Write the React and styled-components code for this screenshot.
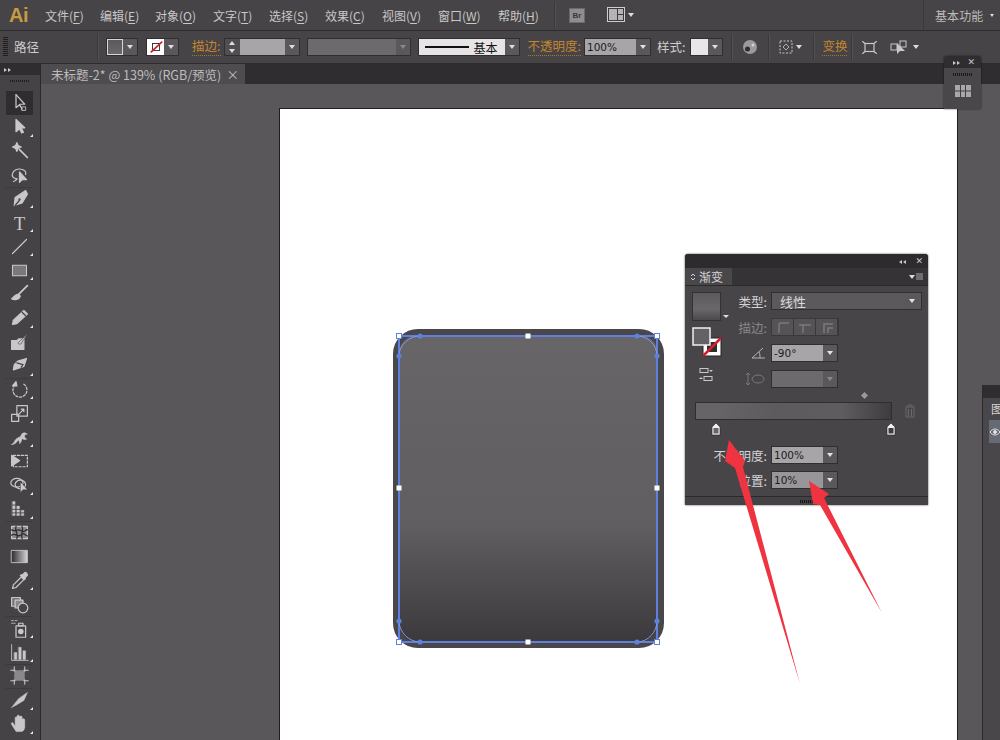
import React from "react"
import styled, { createGlobalStyle } from "styled-components"

const GlobalStyle = createGlobalStyle`
  html, body { margin: 0; padding: 0; background: #59565a; }
  * { box-sizing: border-box; }
`

const cjk = `"Noto Sans CJK SC", "Liberation Sans", sans-serif`
const ICON = "#c9c7c9"

const Root = styled.div`
  position: relative;
  width: 1000px;
  height: 740px;
  overflow: hidden;
  display: flex;
  flex-direction: column;
  background: #59565a;
  font-family: ${cjk};
  color: #cfcdcf;
`

/* menu bar */
const MenuBar = styled.div`
  height: 31px;
  flex: none;
  display: flex;
  align-items: center;
  background: #464446;
  border-bottom: 1px solid #2d2b2d;
`
const Logo = styled.div`
  width: 45px;
  padding-left: 9px;
  font: bold 20px "Liberation Sans", sans-serif;
  color: #c59a42;
  letter-spacing: -0.5px;
`
const MenuItem = styled.div`
  width: ${p => p.$w}px;
  flex: none;
  font-size: 12px;
  color: #c9c7c9;
  white-space: nowrap;
  u { text-underline-offset: 2px; }
`
const VSep = styled.div`
  width: 1px;
  height: ${p => p.$h || 26}px;
  flex: none;
  margin-left: ${p => p.$ml || 0}px;
  background: #3a383a;
  box-shadow: 1px 0 0 #525052;
`
const BrBadge = styled.div`
  width: 16px;
  height: 15px;
  margin-left: 14px;
  flex: none;
  background: #8f8d8f;
  border: 1px solid #6c6a6c;
  color: #3b393b;
  font: bold 8px/13px "Liberation Sans", sans-serif;
  text-align: center;
`
const Workspace = styled.div`
  margin-left: auto;
  width: 77px;
  height: 30px;
  display: flex;
  align-items: center;
  padding-left: 11px;
  border-left: 1px solid #3a383a;
  font-size: 12px;
  color: #bdbbbd;
  letter-spacing: 0.1px;
`

const Caret = styled.span`
  display: inline-block;
  flex: none;
  margin-left: ${p => p.$ml || 0}px;
  width: 0;
  height: 0;
  border-left: ${p => p.$s || 3}px solid transparent;
  border-right: ${p => p.$s || 3}px solid transparent;
  border-top: ${p => (p.$s || 3) + 1}px solid ${p => p.$c || "#dedcde"};
`

/* control bar */
const ControlBar = styled.div`
  height: 33px;
  flex: none;
  display: flex;
  align-items: center;
  padding-left: 3px;
  background: #464446;
  border-bottom: 1px solid #2d2b2d;
`
const Grip = styled.div`
  width: 5px;
  height: 20px;
  flex: none;
  background: repeating-linear-gradient(#1f1d1f 0 1px, transparent 1px 2px);
`
const ControlLabel = styled.div`
  flex: none;
  margin-left: ${p => p.$ml || 0}px;
  font-size: 12.5px;
  line-height: 18px;
  white-space: nowrap;
  color: ${p => (p.$link ? "#c4862f" : "#cfcdcf")};
  ${p => p.$link && "border-bottom: 1px dotted #a87428; line-height: 16px; height: 18px;"}
`
const Combo = styled.div`
  flex: none;
  display: flex;
  height: ${p => p.$h || 18}px;
  margin-left: ${p => p.$ml || 0}px;
  border: 1px solid #302e30;
  background: #5a585a;
`
const ComboValue = styled.div`
  width: ${p => p.$w}px;
  height: 100%;
  display: flex;
  align-items: center;
  padding-left: ${p => p.$pl || 2}px;
  background: ${p => p.$bg || "#a7a5a8"};
  font: 10.5px "DejaVu Sans", sans-serif;
  color: #1c1b1c;
  overflow: hidden;
  white-space: nowrap;
`
const ComboArrow = styled.div`
  width: ${p => p.$w || 14}px;
  height: 100%;
  display: flex;
  align-items: center;
  justify-content: center;
`
const Spinner = styled.div`
  width: 15px;
  height: 100%;
  display: flex;
  flex-direction: column;
  align-items: center;
  justify-content: space-around;
  background: #504e50;
  span:first-child { transform: rotate(180deg); }
`
const StrokeLine = styled.div`
  width: 44px;
  height: 2px;
  background: #111;
  margin-right: 5px;
`
const BaseText = styled.span`
  font: 12px ${cjk};
  color: #111;
`
const IconSlot = styled.div`
  flex: none;
  display: flex;
  align-items: center;
  margin-left: ${p => p.$ml || 0}px;
`

/* body */
const Body = styled.div`
  flex: 1;
  min-height: 0;
  display: flex;
`
const ToolPanel = styled.div`
  width: 41px;
  flex: none;
  display: flex;
  flex-direction: column;
  background: #464347;
  border-right: 1px solid #2b292b;
`
const ToolHead = styled.div`
  height: 11px;
  flex: none;
  padding-left: 4px;
  display: flex;
  align-items: center;
  gap: 0;
  background: #2f2d2f;
`
const TinyRight = styled.span`
  display: inline-block;
  width: 0;
  height: 0;
  border-top: 2.5px solid transparent;
  border-bottom: 2.5px solid transparent;
  border-left: 3px solid ${p => p.$c || "#c9c7c9"};
  margin-right: 1px;
`
const ToolGrip = styled.div`
  height: 2px;
  width: 19px;
  margin: 5px 0 9px 10px;
  flex: none;
  background: repeating-linear-gradient(90deg, #1f1d1f 0 1px, transparent 1px 2px);
`
const ToolRow = styled.div`
  position: relative;
  height: 23.88px;
  width: 27px;
  margin-left: 6px;
  flex: none;
  display: flex;
  align-items: center;
  justify-content: center;
  background: ${p => (p.$active ? "#2f2d30" : "transparent")};
  ${p => p.$sep && "box-shadow: 0 1px 0 #3c3a3d;"}
`
const Corner = styled.span`
  position: absolute;
  right: 0;
  bottom: 2px;
  width: 0;
  height: 0;
  border-left: 3px solid transparent;
  border-bottom: 3px solid #e8e6e8;
`
const Main = styled.div`
  flex: 1;
  min-width: 0;
  display: flex;
  flex-direction: column;
`
const TabStrip = styled.div`
  height: 20px;
  flex: none;
  display: flex;
  background: #2f2d2f;
`
const DocTab = styled.div`
  width: 204px;
  height: 100%;
  display: flex;
  align-items: center;
  justify-content: space-between;
  padding: 0 6px 0 10px;
  background: #4f4c4f;
  font-size: 12.5px;
  color: #bdbbbd;
  white-space: nowrap;
`
const Canvas = styled.div`
  flex: 1;
  position: relative;
  background: #5a575b;
  overflow: hidden;
`
const Artboard = styled.div`
  position: absolute;
  left: 238px;
  top: 24px;
  width: 679px;
  height: 640px;
  background: #fff;
  border: 1px solid #1f1d1f;
`
const ShapeArt = styled.svg`
  position: absolute;
  left: 109px;
  top: 215px;
`

/* floating panels */
const MiniPanel = styled.div`
  position: absolute;
  left: 944px;
  top: 56px;
  width: 37px;
  height: 53px;
  display: flex;
  flex-direction: column;
  align-items: center;
  background: #4a474a;
  border-radius: 3px 3px 0 0;
  box-shadow: 0 0 2px rgba(0,0,0,.7);
`
const MiniHead = styled.div`
  height: 12px;
  width: 100%;
  flex: none;
  display: flex;
  align-items: center;
  justify-content: flex-end;
  gap: 6px;
  padding-right: 6px;
  background: #2f2d2f;
  border-radius: 3px 3px 0 0;
  font: 9px "DejaVu Sans", sans-serif;
  color: #c9c7c9;
`
const MiniGrip = styled.div`
  width: 20px;
  height: 3px;
  margin: 5px 0 9px;
  background: repeating-linear-gradient(90deg, #191719 0 1px, transparent 1px 2px);
`
const GradientPanel = styled.div`
  position: absolute;
  left: 685px;
  top: 254px;
  width: 243px;
  height: 251px;
  display: flex;
  flex-direction: column;
  background: #484548;
  border-radius: 3px 3px 0 0;
  box-shadow: 0 0 2px rgba(0,0,0,.8);
`
const PanelTitle = styled.div`
  height: 14px;
  flex: none;
  display: flex;
  align-items: center;
  justify-content: flex-end;
  gap: 8px;
  padding-right: 5px;
  background: #2d2b2d;
  border-radius: 3px 3px 0 0;
  font: 9px "DejaVu Sans", sans-serif;
  color: #c9c7c9;
`
const TinyLeft = styled.span`
  display: inline-block;
  width: 0;
  height: 0;
  border-top: 2.5px solid transparent;
  border-bottom: 2.5px solid transparent;
  border-right: 3px solid #c9c7c9;
  margin-right: 1px;
`
const PanelTabs = styled.div`
  height: 18px;
  flex: none;
  display: flex;
  align-items: stretch;
  justify-content: space-between;
  background: #353336;
  border-bottom: 1px solid #2b292b;
`
const PanelTab = styled.div`
  width: 47px;
  display: flex;
  align-items: center;
  gap: 3px;
  padding-left: 5px;
  background: #4a474a;
  font-size: 12px;
  color: #d6d4d6;
`
const PanelMenu = styled.div`
  display: flex;
  align-items: center;
  gap: 1px;
  padding-right: 5px;
`
const MenuSquare = styled.span`
  width: 7px;
  height: 7px;
  background: #6e6c6e;
`
const PanelBody = styled.div`
  flex: 1;
  min-height: 0;
  padding: 6px 7px 0;
`
const TopArea = styled.div`
  display: flex;
`
const SwatchColumn = styled.div`
  width: 43px;
  flex: none;
  display: flex;
  flex-direction: column;
  align-items: flex-start;
`
const GradientSwatch = styled.div`
  width: 29px;
  height: 29px;
  flex: none;
  position: relative;
  border: 1px solid #333133;
  background: linear-gradient(#5d5a5e, #6a676b 60%, #4c494c);
  &::after {
    content: "";
    position: absolute;
    right: -9px;
    bottom: 2px;
    border-left: 3px solid transparent;
    border-right: 3px solid transparent;
    border-top: 3px solid #e0dee0;
  }
`
const FieldColumn = styled.div`
  display: flex;
  flex-direction: column;
  gap: 8px;
`
const FieldRow = styled.div`
  display: flex;
  align-items: center;
  height: ${p => p.$h || 18}px;
`
const FieldLabel = styled.div`
  width: ${p => p.$w || 32}px;
  flex: none;
  margin-right: 4px;
  text-align: right;
  font-size: 12.5px;
  white-space: nowrap;
  color: ${p => (p.$dim ? "#878587" : "#d6d4d6")};
`
const LabelIcon = styled.div`
  width: 32px;
  flex: none;
  margin-right: 4px;
  display: flex;
  justify-content: flex-end;
  padding-right: 2px;
`
const CapButtons = styled.div`
  display: flex;
  height: 18px;
  border: 1px solid #3a383a;
`
const CapButton = styled.div`
  width: 22px;
  height: 100%;
  display: flex;
  align-items: center;
  justify-content: center;
  background: #565356;
  border-right: 1px solid #3a383a;
`
const SliderHead = styled.div`
  height: 14px;
  padding-left: 170px;
  display: flex;
  align-items: center;
`
const Diamond = styled.span`
  width: 5px;
  height: 5px;
  background: #9a989a;
  transform: rotate(45deg);
`
const SliderRow = styled.div`
  display: flex;
  align-items: center;
  gap: 12px;
  padding-left: 3px;
`
const GradientBar = styled.div`
  width: 197px;
  height: 18px;
  border: 1px solid #2f2d2f;
  background: linear-gradient(90deg, #676468 0 10%, #5e5b5f 40%, #5f5c60 75%, #3f3c3f);
`
const StopRow = styled.div`
  display: flex;
  justify-content: space-between;
  width: 187px;
  margin: 2px 0 10px 18px;
`
const BottomArea = styled.div`
  display: flex;
  flex-direction: column;
  gap: 7px;
`
const PanelFoot = styled.div`
  height: 9px;
  flex: none;
  display: flex;
  align-items: center;
  justify-content: center;
  border-top: 1px solid #2b292b;
  background: #454245;
`
const FootGrip = styled.div`
  width: 14px;
  height: 3px;
  background: repeating-linear-gradient(90deg, #161416 0 1px, transparent 1px 2px);
`
const SidePanel = styled.div`
  position: absolute;
  left: 982px;
  top: 385px;
  width: 18px;
  height: 355px;
  background: #4a474a;
  border-left: 1px solid #2b292b;
`
const SideHead = styled.div`
  height: 13px;
  background: #2f2d2f;
`
const SideTab = styled.div`
  height: 22px;
  padding-left: 8px;
  font-size: 12px;
  line-height: 22px;
  color: #d6d4d6;
  white-space: nowrap;
  overflow: hidden;
`
const SideEyeRow = styled.div`
  height: 23px;
  margin-left: 6px;
  padding-left: 1px;
  display: flex;
  align-items: center;
  background: #666a74;
`
const ArrowLayer = styled.svg`
  position: absolute;
  left: 0;
  top: 0;
  pointer-events: none;
`

const G = ({ children }) => (
  <svg width="21" height="21" viewBox="0 0 24 24" fill="none" stroke={ICON} strokeWidth="1.4" strokeLinejoin="round" strokeLinecap="round">
    {children}
  </svg>
)

const tools = [
  { active: true, icon: <><path d="M8 3v15l4-3.500 3 5" fill="#2f2d30" /><path d="M8 3l10 11h-6" /><rect x="15" y="17" width="4" height="4" strokeWidth="1" /></> },
  { corner: true, icon: <path d="M8 4v14l4-3.500 2.500 5 2-1-2.500-5H18z" fill={ICON} /> },
  { icon: <><path d="M9 3l1.500 3.500L14 8l-3.500 1.500L9 13l-1.500-3.500L4 8l3.500-1.500z" fill={ICON} /><path d="M12 11l9 9" strokeWidth="2" /></> },
  { sep: true, icon: <><path d="M9 17c-4-.5-6-3-5-6 1-4 6-6 10-5 4 .8 6 3 5 6" /><path d="M9 17c-1 2-3 3-4 3" /><path d="M12 9v12l3-3h5z" fill={ICON} /></> },
  { corner: true, icon: <><path d="M19 3l2 4-6 10-9 3 1-9z" fill={ICON} /><path d="M7 20l5-6" stroke="#464347" /><circle cx="12" cy="13" r="1.300" fill="#464347" stroke="none" /></> },
  { corner: true, icon: <text x="12" y="20" textAnchor="middle" fontSize="21" fontFamily="Liberation Serif, serif" fill={ICON} stroke="none">T</text> },
  { corner: true, icon: <path d="M4 20L20 4" /> },
  { corner: true, icon: <rect x="4" y="6" width="16" height="12" fill="#7b787c" strokeWidth="1.200" /> },
  { icon: <><path d="M21 3L11 13" strokeWidth="2" /><path d="M11 13c-4-1-5 3-8 5 3 2 9 1 10-3z" fill={ICON} /></> },
  { corner: true, icon: <><path d="M17 4l4 4L9 19l-5 1 1-5z" fill={ICON} /><path d="M15 6l4 4" stroke="#464347" /></> },
  { icon: <><path d="M3 11h6l2-2h6v12H3z" fill={ICON} /><path d="M21 3l-9 9c-2 1-2 3 0 3 2 0 3-1 3-2z" fill={ICON} stroke="#464347" strokeWidth=".7" /></> },
  { corner: true, sep: true, icon: <><path d="M10 7l10-3-3 9-12 4 1-6z" fill={ICON} /><path d="M9 9l7 2-2 3" stroke="#464347" /></> },
  { corner: true, icon: <><path d="M17 6a8 8 0 1 1-9 0" strokeDasharray="2.500 2" /><path d="M8 3l1 5H4z" fill={ICON} /></> },
  { corner: true, icon: <><rect x="9" y="3" width="12" height="12" /><rect x="3" y="13" width="8" height="8" /><path d="M11 13l6-6m-3 0h3v3" /></> },
  { corner: true, icon: <path d="M3 20c3-1 3-5 6-7s4-1 5-4c1-2 3-3 5-2l2 1-3 1c-1 3 1 3 2 5-2 1-4 0-5-1-1 3-1 5-3 6 0-2 0-3-1-4-2 1-3 5-8 5z" fill={ICON} strokeWidth=".6" /> },
  { icon: <><rect x="5" y="5" width="16" height="13" strokeDasharray="2.500 2" /><path d="M3 5v12l9-6z" fill={ICON} /></> },
  { corner: true, icon: <><ellipse cx="9" cy="10" rx="7" ry="5" /><ellipse cx="13" cy="12" rx="6" ry="5" /><path d="M13 9v12l3-3h5z" fill={ICON} stroke="#464347" strokeWidth=".6" /></> },
  { corner: true, sep: true, icon: <><path d="M4 4h3v16H4zM9 9h3v11H9zM14 14h3v6h-3z" fill={ICON} strokeWidth=".4" /><path d="M4 8h16M4 13h16M4 17h18" stroke="#464347" strokeWidth="1" /></> },
  { icon: <><rect x="3" y="5" width="18" height="14" fill="#8a888a" /><path d="M3 9c5 3 6-2 11 1s4-2 7-1M3 15c4-3 7 3 10 0s5-1 8 1M8 5c-2 5 3 8 1 14M15 5c2 5-2 8 0 14" stroke="#2f2d30" strokeWidth="1.500" /></> },
  { icon: <rect x="3" y="5" width="18" height="14" fill="url(#toolGrad)" strokeWidth="1" /> },
  { corner: true, icon: <><path d="M4 21l1-4 9-9 3 3-9 9z" /><path d="M13 6l5 5 1-3 2-2c0-2-2-4-3-3l-2 2z" fill={ICON} /></> },
  { sep: true, icon: <><rect x="3" y="4" width="10" height="10" fill="#777578" /><rect x="7" y="7" width="9" height="9" fill="#8a888a" /><circle cx="16" cy="16" r="5.500" fill="#464347" /></> },
  { corner: true, icon: <><rect x="8" y="9" width="11" height="13" /><circle cx="13.500" cy="15.500" r="2.500" fill={ICON} /><path d="M11 6h5v3h-5z" /><path d="M3 3h2M7 3h2M3 6h2M6 6h1" strokeWidth="1" /></> },
  { corner: true, sep: true, icon: <><path d="M3 3v18h19" strokeWidth="1" /><path d="M6 12h3v8H6zM11 6h3v14h-3zM16 10h3v10h-3z" fill={ICON} strokeWidth=".4" /></> },
  { sep: true, icon: <><rect x="6" y="6" width="12" height="12" fill="#8a888a" stroke="none" /><path d="M6 2v5M18 2v5M6 17v5M18 17v5M2 6h5M17 6h5M2 18h5M17 18h5" strokeWidth="1.200" /></> },
  { corner: true, icon: <path d="M3 21l8-10 10-7-4 9-8 5z" fill={ICON} strokeWidth=".6" /> },
  { corner: true, icon: <path d="M8 21l-5-8c-1-2 1-3 2-1l2 3V6c0-2 2-2 2 0v5V4c0-2 3-2 3 0v7V5c0-2 3-2 3 0v7-4c0-2 3-2 3 0v8c0 3-2 5-3 5z" fill={ICON} strokeWidth=".6" /> },
]

const menus = [
  ["文件(", "F", ")", 55], ["编辑(", "E", ")", 55], ["对象(", "O", ")", 58], ["文字(", "T", ")", 56],
  ["选择(", "S", ")", 56], ["效果(", "C", ")", 57], ["视图(", "V", ")", 56], ["窗口(", "W", ")", 60], ["帮助(", "H", ")", 56],
]

const Select = ({ value, w, bg, arrow = 14, ml, dim, pl, h }) => (
  <Combo $ml={ml} $h={h}>
    <ComboValue $w={w} $bg={bg} $pl={pl}>{value}</ComboValue>
    <ComboArrow $w={arrow}><Caret $s={3.5} $c={dim ? "#8a888a" : "#e4e2e4"} /></ComboArrow>
  </Combo>
)

const StopMark = ({ dark }) => (
  <svg width="12" height="14" viewBox="0 0 12 14">
    <path d="M6 1l4 4v8H2V5z" fill="#f0eef0" stroke="#222" strokeWidth=".6" />
    <rect x="3.500" y="6" width="5" height="5.500" fill={dark ? "#3f3c3f" : "#686568"} />
  </svg>
)

const Cap = ({ d }) => (
  <CapButton>
    <svg width="14" height="14" viewBox="0 0 14 14" fill="none" stroke="#7b797b" strokeWidth="1.500"><path d={d} /></svg>
  </CapButton>
)

const corners = [[399, 336], [657, 336], [399, 642], [657, 642]]
const mids = [[528, 336], [399, 488], [657, 488], [528, 642]]
const anchors = [[420, 336], [637, 336], [399, 356], [657, 356], [399, 621], [657, 621], [420, 642], [637, 642]]

function SelectedShape() {
  return (
    <ShapeArt width="280" height="330" viewBox="389 324 280 330">
      <defs>
        <linearGradient id="shapeFill" x1="0" y1="0" x2="0" y2="1">
          <stop offset="0" stopColor="#686568" />
          <stop offset="0.62" stopColor="#615e62" />
          <stop offset="0.76" stopColor="#535053" />
          <stop offset="1" stopColor="#3b383b" />
        </linearGradient>
      </defs>
      <rect x="396" y="332" width="265" height="313" rx="22" fill="url(#shapeFill)" stroke="#4a474b" strokeWidth="6" />
      <rect x="399" y="336" width="258" height="306" fill="none" stroke="#5f80dc" strokeWidth="2" />
      <path d="M399 356C399 345 409 336 420 336M637 336C648 336 657 345 657 356M657 621C657 632 648 642 637 642M420 642C409 642 399 632 399 621" fill="none" stroke="#7f9be4" strokeWidth="1" />
      {anchors.map(([x, y]) => <circle key={`${x}-${y}`} cx={x} cy={y} r="2.600" fill="#5f80dc" />)}
      {corners.map(([x, y]) => <rect key={`${x}-${y}`} x={x - 2.5} y={y - 2.5} width="5" height="5" fill="#fff" stroke="#5f80dc" />)}
      {mids.map(([x, y]) => <rect key={`${x}-${y}`} x={x - 2.5} y={y - 2.5} width="5" height="5" fill="#fff" />)}
    </ShapeArt>
  )
}

export default function App() {
  return (
    <Root>
      <GlobalStyle />
      <MenuBar>
        <Logo>Ai</Logo>
        {menus.map(([a, b, c, w]) => (
          <MenuItem key={a} $w={w}>{a}<u>{b}</u>{c}</MenuItem>
        ))}
        <VSep />
        <BrBadge>Br</BrBadge>
        <IconSlot $ml={22}>
          <svg width="18" height="16" viewBox="0 0 18 16">
            <rect x=".5" y=".5" width="17" height="14" fill="#3c3a3c" stroke="#cfcdcf" />
            <rect x="2" y="2" width="8" height="11" fill="#b5b3b5" />
            <rect x="11" y="2" width="5" height="5" fill="#b5b3b5" />
            <rect x="11" y="8" width="5" height="5" fill="#b5b3b5" />
          </svg>
          <Caret $ml={3} />
        </IconSlot>
        <Workspace>基本功能<Caret $ml={7} $s={2} /></Workspace>
      </MenuBar>

      <ControlBar>
        <Grip />
        <ControlLabel $ml={6}>路径</ControlLabel>
        <VSep $ml={58} />
        <Combo $ml={8}>
          <ComboValue $w={16} $bg="linear-gradient(#5b585c, #6b686c)" style={{ outline: "1px solid #d8d6d8", outlineOffset: "-1px" }} />
          <ComboArrow><Caret $s={3.5} /></ComboArrow>
        </Combo>
        <Combo $ml={8}>
          <ComboValue $w={17} $bg="#fff" $pl={0}>
            <svg width="17" height="16" viewBox="0 0 17 16">
              <rect x="4" y="4" width="8" height="8" fill="none" stroke="#222" />
              <path d="M2 14L15 2" stroke="#d3202a" strokeWidth="2" />
            </svg>
          </ComboValue>
          <ComboArrow><Caret $s={3.5} /></ComboArrow>
        </Combo>
        <ControlLabel $ml={13} $link>描边:</ControlLabel>
        <Combo $ml={3}>
          <Spinner><Caret $s={3} /><Caret $s={3} /></Spinner>
          <ComboValue $w={45} />
          <ComboArrow><Caret $s={3.5} /></ComboArrow>
        </Combo>
        <Select ml={7} w={88} bg="#6c6a6d" dim value="" />
        <Combo $ml={7}>
          <ComboValue $w={86} $bg="#e6e4e7" $pl={6}><StrokeLine /><BaseText>基本</BaseText></ComboValue>
          <ComboArrow><Caret $s={3.5} /></ComboArrow>
        </Combo>
        <ControlLabel $ml={8} $link>不透明度:</ControlLabel>
        <Select ml={3} w={51} value="100%" />
        <ControlLabel $ml={6}>样式:</ControlLabel>
        <Combo $ml={5}>
          <ComboValue $w={17} $bg="#e8e6ea" />
          <ComboArrow><Caret $s={3.5} /></ComboArrow>
        </Combo>
        <VSep $ml={8} />
        <IconSlot $ml={10}>
          <svg width="16" height="16" viewBox="0 0 16 16">
            <circle cx="8" cy="8" r="7" fill="#9b999b" />
            <circle cx="5.500" cy="10" r="2.500" fill="#2f2d2f" />
            <circle cx="11" cy="6" r="1.500" fill="#d5d3d5" />
          </svg>
        </IconSlot>
        <VSep $ml={10} />
        <IconSlot $ml={10}>
          <svg width="15" height="14" viewBox="0 0 15 14" fill="none" stroke="#c9c7c9">
            <rect x="1" y="1" width="12" height="12" strokeDasharray="2 1.500" />
            <path d="M7 4l3 3-3 3-3-3z" strokeWidth=".8" />
          </svg>
          <Caret $ml={2} />
        </IconSlot>
        <VSep $ml={11} />
        <ControlLabel $ml={8} $link>变换</ControlLabel>
        <VSep $ml={4} />
        <IconSlot $ml={10}>
          <svg width="15" height="13" viewBox="0 0 15 13" fill="none" stroke="#c9c7c9" strokeWidth="1.200">
            <rect x="3" y="2.500" width="9" height="8" />
            <path d="M0 0l3 2.500M15 0l-3 2.500M0 13l3-2.500M15 13l-3-2.500" />
          </svg>
        </IconSlot>
        <IconSlot $ml={13}>
          <svg width="18" height="15" viewBox="0 0 18 15">
            <rect x="1" y="4" width="6" height="6" fill="none" stroke="#c9c7c9" />
            <rect x="10" y="1" width="6" height="6" fill="none" stroke="#c9c7c9" />
            <path d="M7 3v11l3-3h5z" fill="#c9c7c9" />
          </svg>
          <Caret $ml={5} />
        </IconSlot>
      </ControlBar>

      <Body>
        <ToolPanel>
          <ToolHead><TinyRight /><TinyRight /></ToolHead>
          <ToolGrip />
          <svg width="0" height="0">
            <defs>
              <linearGradient id="toolGrad"><stop offset="0" stopColor="#2f2d30" /><stop offset="1" stopColor="#d5d3d5" /></linearGradient>
            </defs>
          </svg>
          {tools.map((t, i) => (
            <ToolRow key={i} $active={t.active} $sep={t.sep}>
              <G>{t.icon}</G>
              {t.corner && <Corner />}
            </ToolRow>
          ))}
        </ToolPanel>
        <Main>
          <TabStrip>
            <DocTab>未标题-2* @ 139% (RGB/预览)<span>×</span></DocTab>
          </TabStrip>
          <Canvas>
            <Artboard>
              <SelectedShape />
            </Artboard>
          </Canvas>
        </Main>
      </Body>

      <MiniPanel>
        <MiniHead><span><TinyRight /><TinyRight /></span>✕</MiniHead>
        <MiniGrip />
        <svg width="16" height="12" viewBox="0 0 16 12">
          <rect width="16" height="12" fill="#a9a7a9" />
          <path d="M5.500 0v12M10.500 0v12M0 6h16" stroke="#3f3d3f" />
        </svg>
      </MiniPanel>

      <GradientPanel>
        <PanelTitle><span><TinyLeft /><TinyLeft /></span>✕</PanelTitle>
        <PanelTabs>
          <PanelTab>
            <svg width="6" height="10" viewBox="0 0 6 10" fill="none" stroke="#d6d4d6"><path d="M1 4l2-2 2 2M1 6l2 2 2-2" /></svg>
            渐变
          </PanelTab>
          <PanelMenu><Caret $s={3} /><MenuSquare /></PanelMenu>
        </PanelTabs>
        <PanelBody>
          <TopArea>
            <SwatchColumn>
              <GradientSwatch />
              <svg width="30" height="30" viewBox="0 0 30 30" style={{ marginTop: 6 }}>
                <rect x="11" y="11" width="18" height="18" fill="#fff" stroke="#222" />
                <rect x="15" y="15" width="10" height="10" fill="#2f2d2f" />
                <path d="M11 29L29 11" stroke="#d3202a" strokeWidth="2.500" />
                <rect x="1" y="1" width="17" height="17" fill="#656266" stroke="#f0eef0" strokeWidth="1.500" />
              </svg>
              <svg width="16" height="16" viewBox="0 0 16 16" style={{ margin: "10px 0 0 6px" }} fill="none" stroke="#c9c7c9">
                <rect x="2" y="1.500" width="8" height="4" />
                <rect x="6" y="9.500" width="8" height="4" />
                <path d="M11 3h4l-2 2zM1 12h4L3 10z" fill="#c9c7c9" stroke="none" />
              </svg>
            </SwatchColumn>
            <FieldColumn>
              <FieldRow>
                <FieldLabel>类型:</FieldLabel>
                <Select w={131} arrow={18} bg="#5c595c" value={<span style={{ font: `13px ${cjk}`, color: "#dcdadc", paddingLeft: 6 }}>线性</span>} />
              </FieldRow>
              <FieldRow>
                <FieldLabel $dim>描边:</FieldLabel>
                <CapButtons>
                  <Cap d="M3 13V5a2 2 0 0 1 2-2h8" />
                  <Cap d="M5 13V5h8M1 5h4" />
                  <Cap d="M4 13V4h9M8 13V8h5" />
                </CapButtons>
              </FieldRow>
              <FieldRow>
                <LabelIcon>
                  <svg width="14" height="12" viewBox="0 0 14 12" fill="none" stroke="#b5b3b5"><path d="M12 1L1 11h13M8 5c1 2 1 4 1 6" /></svg>
                </LabelIcon>
                <Select w={51} value="-90°" />
              </FieldRow>
              <FieldRow>
                <LabelIcon>
                  <svg width="20" height="14" viewBox="0 0 20 14" fill="none" stroke="#7b797b"><path d="M3 1v12M1 3l2-2 2 2M1 11l2 2 2-2" /><ellipse cx="13" cy="7" rx="6" ry="4" /></svg>
                </LabelIcon>
                <Select w={51} bg="#6c6a6d" dim value="" />
              </FieldRow>
            </FieldColumn>
          </TopArea>
          <SliderHead><Diamond /></SliderHead>
          <SliderRow>
            <GradientBar />
            <svg width="12" height="14" viewBox="0 0 12 14" fill="none" stroke="#6b696b">
              <path d="M1 3h10M4 3V1h4v2M2 4v9h8V4M4.500 5v7M7.500 5v7" />
            </svg>
          </SliderRow>
          <StopRow><StopMark /><StopMark dark /></StopRow>
          <BottomArea>
            <FieldRow>
              <FieldLabel $w={75}>不透明度:</FieldLabel>
              <Select w={51} value="100%" />
            </FieldRow>
            <FieldRow>
              <FieldLabel $w={75}>位置:</FieldLabel>
              <Select w={51} bg="#989699" value="10%" />
            </FieldRow>
          </BottomArea>
        </PanelBody>
        <PanelFoot><FootGrip /></PanelFoot>
      </GradientPanel>

      <SidePanel>
        <SideHead />
        <SideTab>图</SideTab>
        <SideEyeRow>
          <svg width="10" height="8" viewBox="0 0 10 8" fill="none" stroke="#e2e0e2"><path d="M0 4c3-4 7-4 10 0-3 4-7 4-10 0z" /><circle cx="5" cy="4" r="1.500" fill="#e2e0e2" /></svg>
        </SideEyeRow>
      </SidePanel>

      <ArrowLayer width="1000" height="740" viewBox="0 0 1000 740">
        <path d="M729 440L745 461 743 467 800 684 735 468 725 461z" fill="#ef3340" />
        <path d="M809 481L829 494 824 498 882 613 820 505 813 504z" fill="#ef3340" />
      </ArrowLayer>
    </Root>
  )
}
